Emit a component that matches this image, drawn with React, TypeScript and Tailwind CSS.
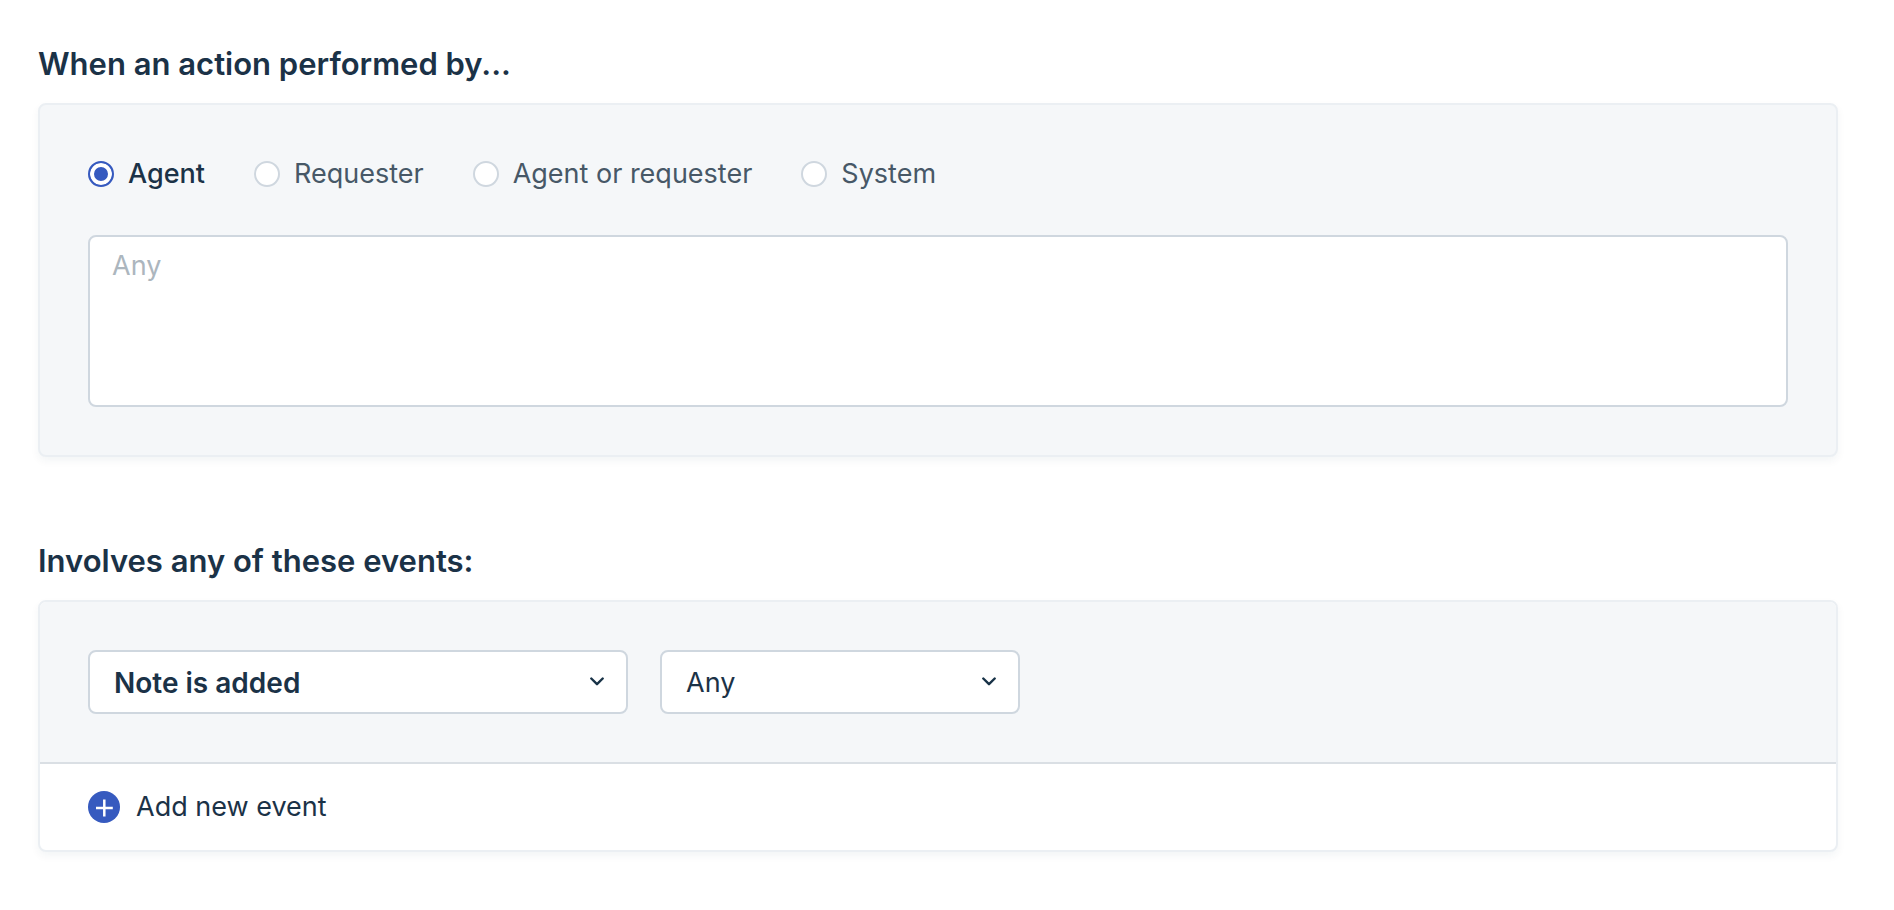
import React, { useState } from "react";

interface Option {
  value: string;
  label: string;
}

const performers: Option[] = [
  { value: "agent", label: "Agent" },
  { value: "requester", label: "Requester" },
  { value: "agent_or_requester", label: "Agent or requester" },
  { value: "system", label: "System" },
];

const eventOptions: Option[] = [
  { value: "note_added", label: "Note is added" },
  { value: "reply_sent", label: "Reply is sent" },
  { value: "status_changed", label: "Status is changed" },
];

const noteTypes: Option[] = [
  { value: "any", label: "Any" },
  { value: "public", label: "Public" },
  { value: "private", label: "Private" },
];

interface SelectBoxProps {
  label: string;
  options: Option[];
  className: string;
}

const SelectBox: React.FC<SelectBoxProps> = ({ label, options, className }) => {
  return (
    <div className={`relative ${className}`}>
      <select
        aria-label={label}
        className="h-16 w-full appearance-none rounded-lg border-2 border-[#cfd7df] bg-white pl-6 pr-14 pt-0.5 outline-none focus:border-[#2c5cc5]"
      >
        {options.map((option) => (
          <option key={option.value} value={option.value}>
            {option.label}
          </option>
        ))}
      </select>
      <svg
        className="pointer-events-none absolute right-6 top-[27px] h-[9px] w-[14px]"
        viewBox="0 0 14 9"
        fill="none"
        stroke="#183247"
        strokeWidth="2.4"
        strokeLinecap="round"
        strokeLinejoin="round"
      >
        <path d="M1.3 1.5L7 7.2L12.7 1.5" />
      </svg>
    </div>
  );
};

const App: React.FC = () => {
  const [performer, setPerformer] = useState("agent");

  return (
    <main className="bg-white pb-12 pl-[38px] pr-14 pt-10 font-['Inter','Liberation_Sans',sans-serif] text-[27px] text-[#1b3247]">
      <section>
        <h2 className="text-[31px] font-semibold leading-[48px]">
          When an action performed by...
        </h2>
        <div className="mt-[15px] rounded-lg border-2 border-[#ebeff3] bg-[#f5f7f9] p-12 shadow-[0_4px_8px_rgba(18,52,77,0.05)]">
          <div
            role="radiogroup"
            aria-label="Performed by"
            className="flex flex-wrap gap-x-[49px] leading-[42px]"
          >
            {performers.map((item) => (
              <label key={item.value} className="flex items-center gap-[14px]">
                <input
                  type="radio"
                  name="performer"
                  value={item.value}
                  checked={performer === item.value}
                  onChange={() => setPerformer(item.value)}
                  className="h-[26px] w-[26px] shrink-0 appearance-none rounded-full border-2 border-[#cfd7df] bg-white checked:border-[#365abf] checked:bg-[#365abf] checked:shadow-[inset_0_0_0_4px_white]"
                />
                <span
                  className={
                    performer === item.value
                      ? "font-medium"
                      : "text-[#475867]"
                  }
                >
                  {item.label}
                </span>
              </label>
            ))}
          </div>
          <textarea
            aria-label="Agents"
            placeholder="Any"
            className="mt-10 block h-[172px] w-full resize-none rounded-lg border-2 border-[#cfd7df] bg-white px-[22px] py-2 leading-[42px] outline-none placeholder:text-[#acb6be] focus:border-[#2c5cc5]"
          />
        </div>
      </section>

      <section className="mt-20">
        <h2 className="text-[31px] font-semibold leading-[48px]">
          Involves any of these events:
        </h2>
        <div className="mt-[15px] rounded-lg border-2 border-[#ebeff3] bg-white shadow-[0_4px_8px_rgba(18,52,77,0.05)]">
          <div className="flex flex-wrap gap-8 rounded-t-md border-b-2 border-[#dadfe4] bg-[#f5f7f9] p-12">
            <SelectBox
              label="Event"
              options={eventOptions}
              className="w-[540px] text-[28px] font-semibold"
            />
            <SelectBox
              label="Note type"
              options={noteTypes}
              className="w-[360px]"
            />
          </div>
          <div className="flex px-12 py-[22px]">
            <button
              type="button"
              className="flex cursor-pointer items-center gap-4 leading-[42px]"
            >
              <svg className="h-8 w-8" viewBox="0 0 32 32" fill="none">
                <circle cx="16" cy="16" r="16" fill="#365abf" />
                <path
                  d="M16.3 8.6V25.4M8 17H24.8"
                  stroke="white"
                  strokeWidth="2.5"
                />
              </svg>
              Add new event
            </button>
          </div>
        </div>
      </section>
    </main>
  );
};

export default App;
